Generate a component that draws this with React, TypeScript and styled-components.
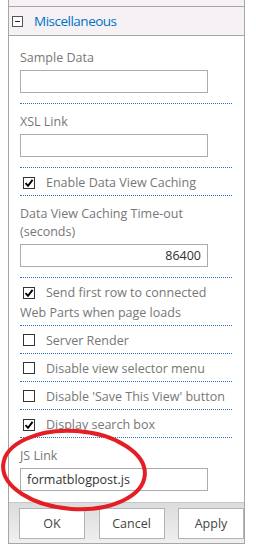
import React from "react";
import styled, { createGlobalStyle } from "styled-components";

const GlobalStyle = createGlobalStyle`
    body {
        margin: 0;
        background: #ffffff;
        font-family: "Open Sans", "Noto Sans", sans-serif;
    }
`;

const Viewport = styled.div`
    position: relative;
    width: 256px;
    height: 550px;
    overflow: hidden;
`;

const Panel = styled.div`
    margin-top: -28px;
    margin-left: 8px;
    width: 235px;
    border-left: 1px solid #a6a6a6;
    border-right: 1px solid #a6a6a6;
    border-bottom: 1px solid #a6a6a6;
    background: #ffffff;
`;

const SectionHeader = styled.div`
    display: flex;
    align-items: center;
    height: 28px;
    padding-left: 3px;
    background: #f5f1f5;
    border-bottom: 1px solid #a6a6a6;
`;

const PrevHeader = styled(SectionHeader)`
    height: 34px;
`;

const ToggleBox = styled.span`
    display: flex;
    align-items: center;
    justify-content: center;
    width: 9px;
    height: 9px;
    border: 1px solid #555555;
    background: #ffffff;
    margin-right: 11px;

    &::after {
        content: "";
        width: 5px;
        height: 1px;
        background: #222222;
    }
`;

const SectionTitle = styled.span`
    font-size: 13.5px;
    color: #0072c6;
    letter-spacing: -0.5px;
`;

const Body = styled.div`
    padding: 4px 12px 0 11px;
`;

const Field = styled.div<{ $last?: boolean }>`
    padding: 9px 0 ${p => (p.$last ? "11px" : "10px")};
    border-bottom: ${p => (p.$last ? "none" : "1px dotted #2f6fc8")};
`;

const Label = styled.div`
    font-size: 12.5px;
    line-height: 18px;
    color: #777777;
`;

const TextBox = styled.div<{ $align?: "left" | "right" }>`
    box-sizing: border-box;
    width: 188px;
    height: 23px;
    margin-top: 3px;
    padding: 0 6px;
    border: 1px solid #ababab;
    background: #ffffff;
    font-size: 12.5px;
    line-height: 21px;
    color: #333333;
    text-align: ${p => p.$align ?? "left"};
`;

const CheckRow = styled.div`
    padding: 5px 0 2px;
    border-bottom: 1px dotted #2f6fc8;
    font-size: 12.5px;
    line-height: 20px;
    color: #777777;
`;

const Box = styled.span`
    display: inline-flex;
    align-items: center;
    justify-content: center;
    box-sizing: border-box;
    width: 12px;
    height: 12px;
    margin: 0 11px 0 3px;
    border: 1px solid #333333;
    background: #ffffff;
    vertical-align: -1px;
`;

const Footer = styled.div`
    display: flex;
    justify-content: space-between;
    height: 41px;
    padding: 5px 0 0 10px;
    box-sizing: border-box;
    border-top: 1px solid #c8c8c8;
    background: linear-gradient(#dcdcdc, #f0f0f0);
`;

const Button = styled.button`
    width: 66px;
    height: 31px;
    border: 1px solid #b4b4b4;
    background: #ffffff;
    font-family: inherit;
    font-size: 12.5px;
    color: #444444;
    padding: 0;
`;

const Ring = styled.svg`
    position: absolute;
    left: 0;
    top: 420px;
    pointer-events: none;
`;

const Check: React.FC<{ checked?: boolean }> = ({ checked }) => (
    <Box>
        {checked && (
            <svg width="10" height="10" viewBox="0 0 10 10">
                <path d="M1.5 5.2 L4 7.8 L8.6 1.8" fill="none" stroke="#000" strokeWidth="1.9" />
            </svg>
        )}
    </Box>
);

const options: { label: string; checked: boolean }[] = [
    { label: "Server Render", checked: false },
    { label: "Disable view selector menu", checked: false },
    { label: "Disable 'Save This View' button", checked: false },
    { label: "Display search box", checked: true },
];

export default function App() {
    return (
        <Viewport>
            <GlobalStyle />
            <Panel>
                <PrevHeader>
                    <ToggleBox />
                    <SectionTitle>AJAX Options</SectionTitle>
                </PrevHeader>
                <SectionHeader>
                    <ToggleBox />
                    <SectionTitle>Miscellaneous</SectionTitle>
                </SectionHeader>
                <Body>
                    <Field>
                        <Label>Sample Data</Label>
                        <TextBox />
                    </Field>
                    <Field>
                        <Label>XSL Link</Label>
                        <TextBox />
                    </Field>
                    <CheckRow>
                        <Check checked />
                        Enable Data View Caching
                    </CheckRow>
                    <Field>
                        <Label>Data View Caching Time-out (seconds)</Label>
                        <TextBox $align="right">86400</TextBox>
                    </Field>
                    <CheckRow>
                        <Check checked />
                        Send first row to connected Web Parts when page loads
                    </CheckRow>
                    {options.map(o => (
                        <CheckRow key={o.label}>
                            <Check checked={o.checked} />
                            {o.label}
                        </CheckRow>
                    ))}
                    <Field $last>
                        <Label>JS Link</Label>
                        <TextBox>formatblogpost.js</TextBox>
                    </Field>
                </Body>
                <Footer>
                    <Button>OK</Button>
                    <Button>Cancel</Button>
                    <Button>Apply</Button>
                </Footer>
            </Panel>
            <Ring width="160" height="100" viewBox="0 0 160 100">
                <ellipse
                    cx="74"
                    cy="50"
                    rx="71"
                    ry="39"
                    transform="rotate(4 74 50)"
                    fill="none"
                    stroke="#e41e25"
                    strokeWidth="4"
                />
            </Ring>
        </Viewport>
    );
}
